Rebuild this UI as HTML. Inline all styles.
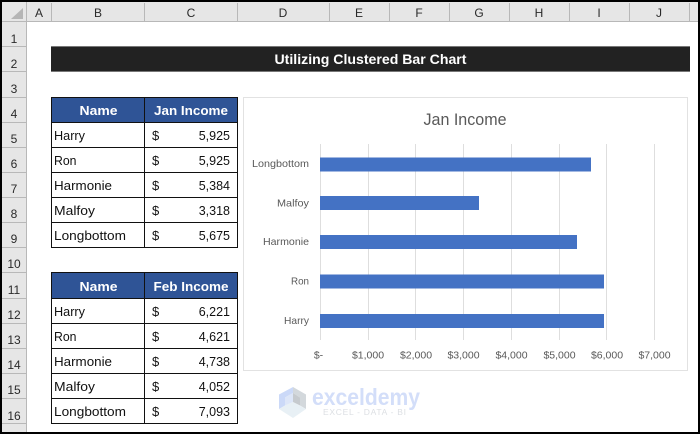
<!DOCTYPE html>
<html><head><meta charset="utf-8"><style>
html,body{margin:0;padding:0;background:#fff;width:700px;height:434px;overflow:hidden}
svg{display:block}
text{font-family:"Liberation Sans",sans-serif}
.h{font-size:12px;fill:#2a2a2a;text-anchor:middle}
.c{font-size:13px;fill:#111}
.n{font-size:12.5px;fill:#111;text-anchor:end}
.w{font-size:13px;fill:#fff;font-weight:bold;text-anchor:middle}
.a{font-size:10.500px;fill:#595959}
</style></head><body>
<svg width="700" height="434" viewBox="0 0 700 434" xmlns="http://www.w3.org/2000/svg">
<rect width="700" height="434" fill="#fff"/>
<!-- headers -->
<rect x="2" y="2" width="696" height="20" fill="#e6e6e6"/>
<rect x="2" y="22" width="25" height="410" fill="#e6e6e6"/>
<path d="M23 8V19H11Z" fill="#b5b5b5"/>
<g stroke="#b8b8b8" fill="none">
<path d="M2 21.5H698M26.5 2V432"/>
<path d="M26.5 3V21M51.5 3V21M144.5 3V21M237.5 3V21M329.5 3V21M389.5 3V21M449.5 3V21M509.5 3V21M569.5 3V21M629.5 3V21M689.5 3V21"/>
<path d="M2 46.5H26M2 71.5H26M2 97.5H26M2 122.5H26M2 147.5H26M2 172.5H26M2 197.5H26M2 222.5H26M2 247.5H26M2 272.5H26M2 298.5H26M2 323.5H26M2 348.500H26M2 373.500H26M2 398.500H26M2 423.500H26"/>
</g>
<text class="h" x="39" y="17">A</text><text class="h" x="98" y="17">B</text><text class="h" x="191" y="17">C</text><text class="h" x="283" y="17">D</text><text class="h" x="359" y="17">E</text><text class="h" x="419" y="17">F</text><text class="h" x="479" y="17">G</text><text class="h" x="539" y="17">H</text><text class="h" x="599" y="17">I</text><text class="h" x="659" y="17">J</text>
<text class="h" x="14" y="43">1</text><text class="h" x="14" y="68">2</text><text class="h" x="14" y="93">3</text><text class="h" x="14" y="118">4</text><text class="h" x="14" y="143">5</text><text class="h" x="14" y="168">6</text><text class="h" x="14" y="193">7</text><text class="h" x="14" y="218">8</text><text class="h" x="14" y="243">9</text><text class="h" x="14" y="268">10</text><text class="h" x="14" y="294">11</text><text class="h" x="14" y="319">12</text><text class="h" x="14" y="344">13</text><text class="h" x="14" y="369">14</text><text class="h" x="14" y="394">15</text><text class="h" x="14" y="420">16</text>
<!-- title -->
<rect x="51" y="46" width="639" height="26" fill="#222"/>
<path d="M51 46.5H690M51 71.5H690" stroke="#777" fill="none"/>
<text x="370.500" y="64" text-anchor="middle" font-size="14" font-weight="bold" fill="#fff" textLength="192" lengthAdjust="spacingAndGlyphs">Utilizing Clustered Bar Chart</text>
<!-- tables -->
<rect x="52" y="98" width="185" height="24" fill="#2f5496"/>
<rect x="52" y="273" width="185" height="25" fill="#2f5496"/>
<g stroke="#111" fill="none">
<path d="M51.500 97.500H237.500V247.500H51.500ZM144.500 97.500V247.500M51.500 122.500H237.500M51.500 147.500H237.500M51.500 172.500H237.500M51.500 197.500H237.500M51.500 222.500H237.500"/>
<path d="M51.500 272.500H237.500V423.500H51.500ZM144.500 272.500V423.500M51.500 298.500H237.500M51.500 323.500H237.500M51.500 348.500H237.500M51.500 373.500H237.500M51.500 398.500H237.500"/>
</g>
<text class="w" x="98.500" y="115" textLength="38" lengthAdjust="spacingAndGlyphs">Name</text>
<text class="w" x="191" y="115" textLength="74" lengthAdjust="spacingAndGlyphs">Jan Income</text>
<text class="w" x="98.500" y="291" textLength="38" lengthAdjust="spacingAndGlyphs">Name</text>
<text class="w" x="191" y="291" textLength="75" lengthAdjust="spacingAndGlyphs">Feb Income</text>
<text class="c" x="54" y="140" textLength="31" lengthAdjust="spacingAndGlyphs">Harry</text><text class="c" x="54" y="165" textLength="22.500" lengthAdjust="spacingAndGlyphs">Ron</text><text class="c" x="54" y="190" textLength="58" lengthAdjust="spacingAndGlyphs">Harmonie</text><text class="c" x="54" y="215" textLength="41" lengthAdjust="spacingAndGlyphs">Malfoy</text><text class="c" x="54" y="240" textLength="72" lengthAdjust="spacingAndGlyphs">Longbottom</text>
<text class="c" x="54" y="316" textLength="31" lengthAdjust="spacingAndGlyphs">Harry</text><text class="c" x="54" y="341" textLength="22.500" lengthAdjust="spacingAndGlyphs">Ron</text><text class="c" x="54" y="366" textLength="58" lengthAdjust="spacingAndGlyphs">Harmonie</text><text class="c" x="54" y="391" textLength="41" lengthAdjust="spacingAndGlyphs">Malfoy</text><text class="c" x="54" y="416" textLength="72" lengthAdjust="spacingAndGlyphs">Longbottom</text>
<text class="c" x="152" y="140">$</text><text class="c" x="152" y="165">$</text><text class="c" x="152" y="190">$</text><text class="c" x="152" y="215">$</text><text class="c" x="152" y="240">$</text>
<text class="c" x="152" y="316">$</text><text class="c" x="152" y="341">$</text><text class="c" x="152" y="366">$</text><text class="c" x="152" y="391">$</text><text class="c" x="152" y="416">$</text>
<text class="n" x="230" y="140">5,925</text><text class="n" x="230" y="165">5,925</text><text class="n" x="230" y="190">5,384</text><text class="n" x="230" y="215">3,318</text><text class="n" x="230" y="240">5,675</text>
<text class="n" x="230" y="316">6,221</text><text class="n" x="230" y="341">4,621</text><text class="n" x="230" y="366">4,738</text><text class="n" x="230" y="391">4,052</text><text class="n" x="230" y="416">7,093</text>
<!-- chart -->
<rect x="243.500" y="97.500" width="444" height="273" fill="#fff" stroke="#e2e2e2"/>
<text x="465" y="125" text-anchor="middle" font-size="16.500" fill="#595959" textLength="83" lengthAdjust="spacingAndGlyphs">Jan Income</text>
<g stroke="#dedede"><path d="M320.500 144V340M368.500 144V340M415.500 144V340M463.500 144V340M511.500 144V340M559.500 144V340M606.500 144V340M654.500 144V340"/></g>
<g fill="#4472c4">
<rect x="320" y="157.500" width="271" height="14"/>
<rect x="320" y="196" width="159" height="14"/>
<rect x="320" y="235" width="257" height="14"/>
<rect x="320" y="274.500" width="284" height="14"/>
<rect x="320" y="314" width="284" height="14"/>
</g>
<g text-anchor="end">
<text class="a" x="309" y="167" textLength="57" lengthAdjust="spacingAndGlyphs">Longbottom</text><text class="a" x="309" y="206.500" textLength="32" lengthAdjust="spacingAndGlyphs">Malfoy</text><text class="a" x="309" y="245" textLength="46" lengthAdjust="spacingAndGlyphs">Harmonie</text><text class="a" x="309" y="284.500" textLength="18" lengthAdjust="spacingAndGlyphs">Ron</text><text class="a" x="309" y="324" textLength="25" lengthAdjust="spacingAndGlyphs">Harry</text>
</g>
<g text-anchor="middle">
<text class="a" x="318.500" y="358.500">$-</text><text class="a" x="368" y="358.500">$1,000</text><text class="a" x="416" y="358.500">$2,000</text><text class="a" x="463.500" y="358.500">$3,000</text><text class="a" x="511.500" y="358.500">$4,000</text><text class="a" x="559.500" y="358.500">$5,000</text><text class="a" x="607" y="358.500">$6,000</text><text class="a" x="654.500" y="358.500">$7,000</text>
</g>
<!-- watermark -->
<path d="M293 387L279 394.500V409L285 405.500V397.500L293 393Z" fill="#cbd9f8"/>
<path d="M293 387L306 394.500V409L300 405.500V397.500L293 393Z" fill="#d3d8dc"/>
<path d="M279 409L293 418L306 409L293 402L285 405.500Z" fill="#e8f0f5"/>
<path d="M293 393L285 397.500V405.500L293 402Z" fill="#dde6f8"/>
<path d="M293 393L300 397.500V405.500L293 402Z" fill="#c6cace"/>
<text x="312" y="405" font-size="23" font-weight="bold" fill="#d3def9" textLength="108" lengthAdjust="spacingAndGlyphs">exceldemy</text>
<text x="323" y="415" font-size="8.500" fill="#dcdfe3" textLength="83">EXCEL - DATA - BI</text>
<!-- frame -->
<path d="M1 1H699V433H1Z" fill="none" stroke="#000" stroke-width="2"/>
<rect x="0" y="432" width="700" height="2" fill="#000"/>
</svg>
</body></html>
